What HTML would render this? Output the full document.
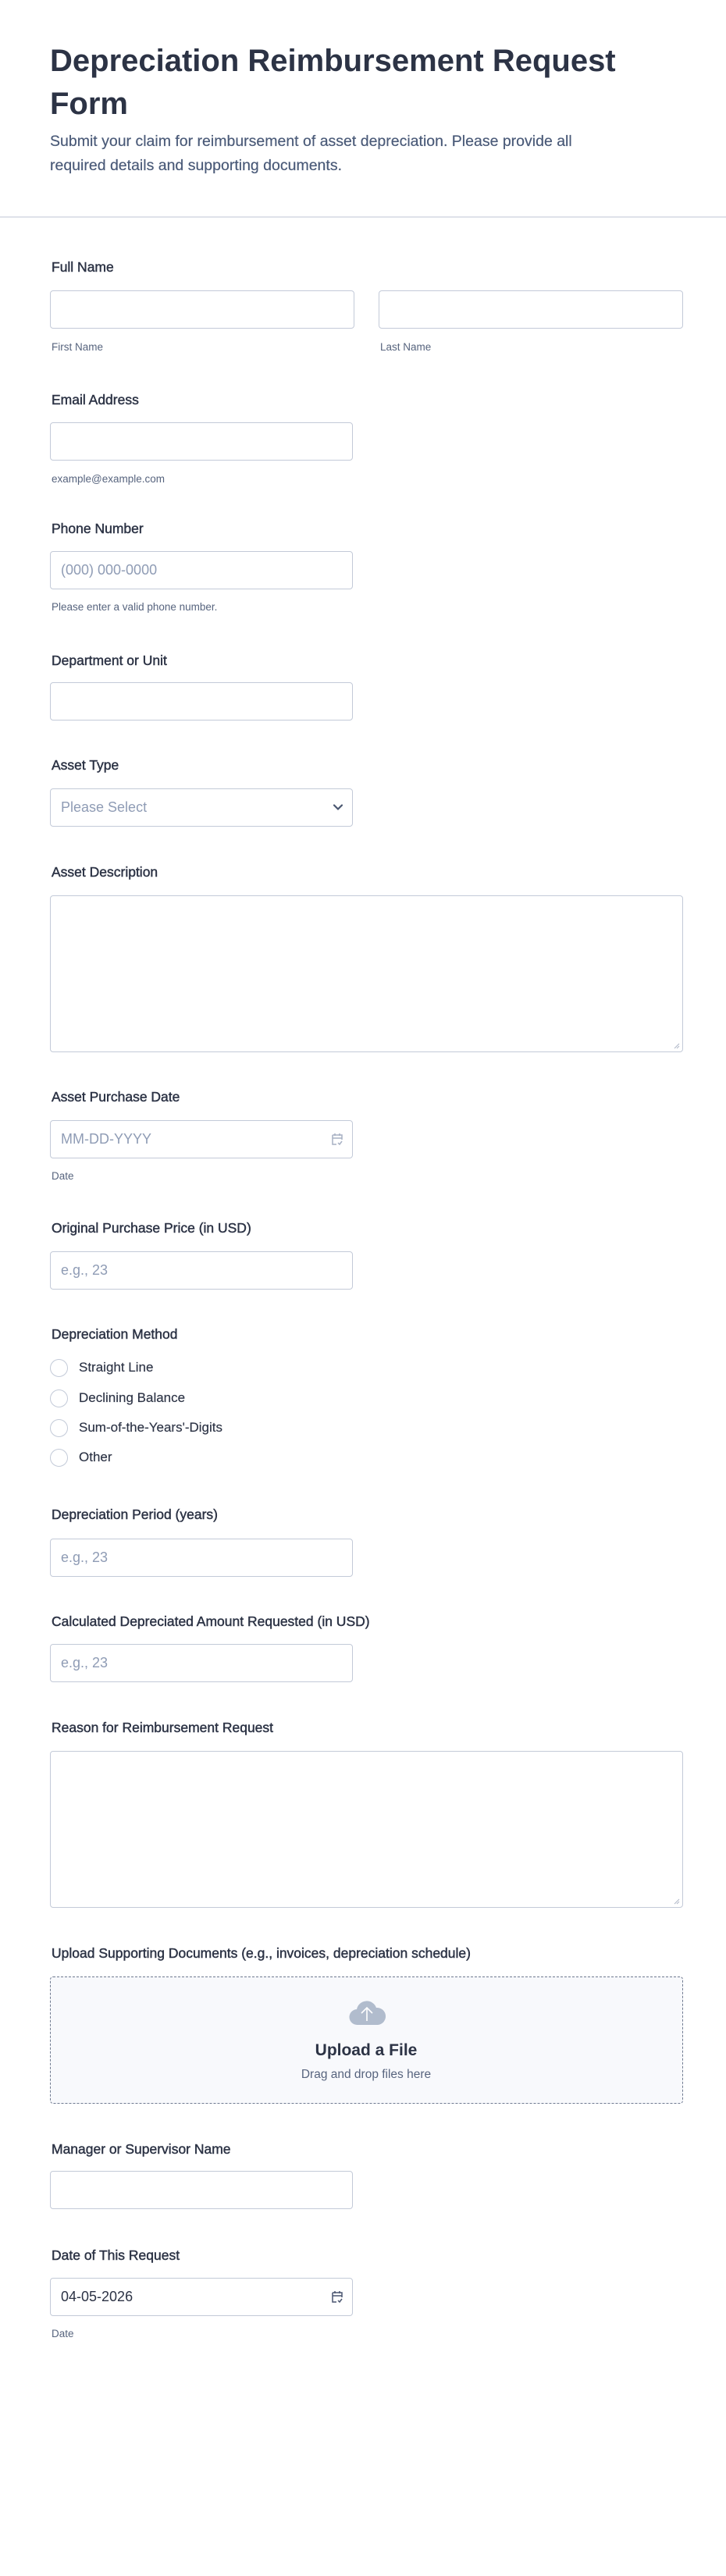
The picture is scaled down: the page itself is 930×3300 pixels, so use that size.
<!DOCTYPE html>
<html><head><meta charset="utf-8"><style>
*{box-sizing:border-box;margin:0;padding:0}
body{width:930px;height:3300px;background:#fff;font-family:"Liberation Sans",Arial,sans-serif;position:relative;overflow:hidden;color:#2c3345}
.a{position:absolute;white-space:nowrap}
h1{position:absolute;left:64px;top:51px;font-size:40px;line-height:55px;font-weight:700;color:#2c3345;width:820px}
.sub{position:absolute;left:64px;top:166px;font-size:19.5px;line-height:31px;color:#4a5a78;width:740px;-webkit-text-stroke:0.2px #4a5a78}
.hr{position:absolute;left:0;top:277px;width:930px;height:2px;background:#dfe2ea}
.lb{position:absolute;left:66px;font-size:17.5px;line-height:24px;font-weight:400;color:#2c3345;white-space:nowrap;-webkit-text-stroke:0.45px #2c3345}
.in{position:absolute;left:64px;width:388px;height:49px;border:1px solid #c3cad8;border-radius:4px;background:#fff}
.ph{position:absolute;left:13px;top:0;line-height:47px;font-size:18px;color:#8f9cb5}
.sl{position:absolute;left:66px;font-size:13.5px;line-height:18px;color:#57647e;white-space:nowrap}
.ta{position:absolute;left:64px;width:811px;height:201px;border:1px solid #c3cad8;border-radius:4px}
.rd{position:absolute;left:64px;width:23px;height:23px;border:1.5px solid #c3cad8;border-radius:50%}
.rt{position:absolute;left:101px;font-size:17px;line-height:24px;color:#2c3345;-webkit-text-stroke:0.15px #2c3345}
.cal{position:absolute;right:11px;top:14px}
</style></head><body>
<h1>Depreciation Reimbursement Request Form</h1>
<div class="sub">Submit your claim for reimbursement of asset depreciation. Please provide all<br>required details and supporting documents.</div>
<div class="hr"></div>

<div class="lb" style="top:330px">Full Name</div>
<div class="in" style="top:372px;width:390px"></div>
<div class="in" style="top:372px;left:485px;width:390px"></div>
<div class="sl" style="top:436px">First Name</div>
<div class="sl" style="top:436px;left:487px">Last Name</div>

<div class="lb" style="top:500px">Email Address</div>
<div class="in" style="top:541px"></div>
<div class="sl" style="top:605px">example@example.com</div>

<div class="lb" style="top:665px">Phone Number</div>
<div class="in" style="top:706px"><span class="ph">(000) 000-0000</span></div>
<div class="sl" style="top:769px">Please enter a valid phone number.</div>

<div class="lb" style="top:834px">Department or Unit</div>
<div class="in" style="top:874px"></div>

<div class="lb" style="top:968px">Asset Type</div>
<div class="in" style="top:1010px"><span class="ph">Please Select</span>
<svg class="a" style="right:11px;top:18px" width="14" height="10" viewBox="0 0 14 10"><path d="M2 2.5l5 5 5-5" fill="none" stroke="#4a5670" stroke-width="2.2" stroke-linecap="round"/></svg></div>

<div class="lb" style="top:1105px">Asset Description</div>
<div class="ta" style="top:1147px"><svg class="a" style="right:3px;bottom:3px" width="8" height="8"><path d="M7 1L1 7M7 4L4 7" stroke="#b0b8c8" stroke-width="1"/></svg></div>

<div class="lb" style="top:1393px">Asset Purchase Date</div>
<div class="in" style="top:1435px"><span class="ph">MM-DD-YYYY</span>
<svg class="cal" width="16" height="18" viewBox="0 0 16 18"><path d="M2 4h12v6M2 4v12h5M2 8h12M5 2v3M11 2v3M9 14l2 2 3-4" fill="none" stroke="#a7b0c3" stroke-width="1.5"/></svg></div>
<div class="sl" style="top:1498px">Date</div>

<div class="lb" style="top:1561px">Original Purchase Price (in USD)</div>
<div class="in" style="top:1603px"><span class="ph">e.g., 23</span></div>

<div class="lb" style="top:1697px">Depreciation Method</div>
<div class="rd" style="top:1741px"></div><div class="rt" style="top:1740px">Straight Line</div>
<div class="rd" style="top:1780px"></div><div class="rt" style="top:1779px">Declining Balance</div>
<div class="rd" style="top:1818px"></div><div class="rt" style="top:1817px">Sum-of-the-Years'-Digits</div>
<div class="rd" style="top:1856px"></div><div class="rt" style="top:1855px">Other</div>

<div class="lb" style="top:1928px">Depreciation Period (years)</div>
<div class="in" style="top:1971px"><span class="ph">e.g., 23</span></div>

<div class="lb" style="top:2065px">Calculated Depreciated Amount Requested (in USD)</div>
<div class="in" style="top:2106px"><span class="ph">e.g., 23</span></div>

<div class="lb" style="top:2201px">Reason for Reimbursement Request</div>
<div class="ta" style="top:2243px"><svg class="a" style="right:3px;bottom:3px" width="8" height="8"><path d="M7 1L1 7M7 4L4 7" stroke="#b0b8c8" stroke-width="1"/></svg></div>

<div class="lb" style="top:2490px">Upload Supporting Documents (e.g., invoices, depreciation schedule)</div>
<div class="a" style="left:64px;top:2532px;width:811px;height:163px;border:1.5px dashed #6f7a90;border-radius:4px;background:#f8f9fc">
<svg class="a" style="left:381px;top:28px" width="48" height="34" viewBox="0 0 48 34"><path d="M12 33a10 10 0 0 1-1-20 13 13 0 0 1 25-2 11 11 0 0 1 2 22z" fill="#b1bccd"/><path d="M24 28V11M17 18l7-7 7 7" fill="none" stroke="#fff" stroke-width="1.6"/></svg>
<div class="a" style="left:0;width:808px;top:80px;text-align:center;font-size:21px;font-weight:700;line-height:28px;color:#2c3345">Upload a File</div>
<div class="a" style="left:0;width:808px;top:114px;text-align:center;font-size:15.5px;line-height:22px;color:#57647e">Drag and drop files here</div>
</div>

<div class="lb" style="top:2741px">Manager or Supervisor Name</div>
<div class="in" style="top:2781px"></div>

<div class="lb" style="top:2877px">Date of This Request</div>
<div class="in" style="top:2918px"><span class="ph" style="color:#2c3345">04-05-2026</span>
<svg class="cal" width="16" height="18" viewBox="0 0 16 18"><path d="M2 4h12v6M2 4v12h5M2 8h12M5 2v3M11 2v3M9 14l2 2 3-4" fill="none" stroke="#4a5670" stroke-width="1.5"/></svg></div>
<div class="sl" style="top:2981px">Date</div>
</body></html>
